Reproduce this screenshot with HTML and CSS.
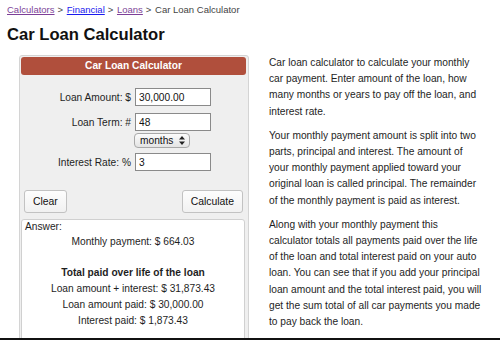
FILE: index.html
```html
<!DOCTYPE html>
<html lang="en">
<head>
    <meta charset="UTF-8">
    <meta name="viewport" content="width=device-width, initial-scale=1.0">
    <title>Car Loan Calculator</title>
    <link rel="stylesheet" href="styles.css">
</head>
<body>
    <div class="breadcrumb">
        <a href="#" class="visited">Calculators</a><span class="sep">&gt;</span>
        <a href="#">Financial</a><span class="sep">&gt;</span>
        <a href="#" class="visited">Loans</a><span class="sep">&gt;</span>
        <span>Car Loan Calculator</span>
    </div>

    <h1>Car Loan Calculator</h1>

    <div class="main">
        <!-- Calculateur -->
        <div class="calc">
            <div class="calc-title">Car Loan Calculator</div>
            <form id="loanForm">
                <div class="row first">
                    <label for="amount">Loan Amount: $</label>
                    <input type="text" id="amount" value="30,000.00">
                </div>
                <div class="row">
                    <label for="term">Loan Term: #</label>
                    <input type="text" id="term" value="48">
                </div>
                <div class="row-select">
                    <span class="select">
                        <select id="unit">
                            <option>months</option>
                            <option>years</option>
                        </select>
                        <svg width="6" height="9" viewBox="0 0 6 9"><path d="M3 0 L6 3.5 H0 Z M3 9 L6 5.5 H0 Z" fill="#222"/></svg>
                    </span>
                </div>
                <div class="row rate">
                    <label for="rate">Interest Rate: %</label>
                    <input type="text" id="rate" value="3">
                </div>
                <div class="buttons">
                    <button type="button" onclick="clearForm()">Clear</button>
                    <button type="submit">Calculate</button>
                </div>
            </form>

            <div class="answer">
                <div class="answer-label">Answer:</div>
                <div class="answer-body">
                    <p>Monthly payment: $ <span id="monthly">664.03</span></p>
                    <p class="blank">&nbsp;</p>
                    <p class="bold">Total paid over life of the loan</p>
                    <p>Loan amount + interest: $ <span id="total">31,873.43</span></p>
                    <p>Loan amount paid: $ <span id="principal">30,000.00</span></p>
                    <p>Interest paid: $ <span id="interest">1,873.43</span></p>
                </div>
            </div>
        </div>

        <!-- Texte -->
        <div class="info">
            <p>Car loan calculator to calculate your monthly car payment. Enter amount of the loan, how many months or years to pay off the loan, and interest rate.</p>
            <p>Your monthly payment amount is split into two parts, principal and interest. The amount of your monthly payment applied toward your original loan is called principal. The remainder of the monthly payment is paid as interest.</p>
            <p>Along with your monthly payment this calculator totals all payments paid over the life of the loan and total interest paid on your auto loan. You can see that if you add your principal loan amount and the total interest paid, you will get the sum total of all car payments you made to pay back the loan.</p>
        </div>
    </div>

    <script>
        function fmt(n) {
            return n.toLocaleString('en-US', { minimumFractionDigits: 2, maximumFractionDigits: 2 });
        }

        document.getElementById('loanForm').addEventListener('submit', function (event) {
            event.preventDefault();
            const amount = parseFloat(document.getElementById('amount').value.replace(/,/g, '')) || 0;
            let n = parseFloat(document.getElementById('term').value) || 0;
            if (document.getElementById('unit').value === 'years') n = n * 12;
            const r = (parseFloat(document.getElementById('rate').value) || 0) / 1200;
            const monthly = r ? amount * r / (1 - Math.pow(1 + r, -n)) : amount / n;
            document.getElementById('monthly').textContent = fmt(monthly);
            document.getElementById('total').textContent = fmt(monthly * n);
            document.getElementById('principal').textContent = fmt(amount);
            document.getElementById('interest').textContent = fmt(monthly * n - amount);
        });

        function clearForm() {
            document.getElementById('amount').value = '';
            document.getElementById('term').value = '';
            document.getElementById('rate').value = '';
        }
    </script>
</body>
</html>
```

FILE: styles.css
```css
body {
    font-family: "Liberation Sans", Arial, sans-serif;
    font-size: 10.2px;
    color: #1e1e1e;
    background-color: #fff;
    margin: 0;
    padding: 3px 7px 0;
    overflow: hidden;
}

body::after {
    content: "";
    position: fixed;
    left: 0;
    right: 0;
    bottom: 0;
    height: 2px;
    background-color: #111;
}

.breadcrumb {
    font-size: 9.5px;
    line-height: 14px;
    color: #555;
}

.breadcrumb a {
    color: #1a1aee;
}

.breadcrumb a.visited {
    color: #7d3f98;
}

.breadcrumb .sep {
    margin: 0 1px 0 3px;
}

.breadcrumb span {
    color: #444;
}

h1 {
    font-size: 16.6px;
    line-height: 20px;
    margin: 8px 0 10px;
    color: #111;
}

.main {
    display: flex;
    align-items: flex-start;
}

.calc {
    width: 230px;
    box-sizing: border-box;
    margin-left: 12px;
    padding: 1px 2px 0 1px;
    background-color: #efefef;
    border: 1px solid #d4d4d4;
    border-radius: 3px;
    height: 300px;
}

.calc-title {
    height: 18px;
    line-height: 18px;
    background-color: #b04f3c;
    color: #fff;
    font-weight: bold;
    text-align: center;
    border-radius: 3px;
}

.row {
    display: flex;
    align-items: center;
    gap: 4px;
    margin-top: 7px;
}

.row.first {
    margin-top: 13px;
}

.row.rate {
    margin-top: 5px;
}

.row label {
    width: 110px;
    text-align: right;
}

input[type="text"] {
    width: 76px;
    height: 18px;
    box-sizing: border-box;
    padding: 0 3px;
    border: 1px solid #8a8a8a;
    font-family: inherit;
    font-size: 10.2px;
    color: #111;
    background: #fff;
}

.row-select {
    margin-top: 2px;
    padding-left: 113px;
}

.select {
    position: relative;
    display: inline-block;
}

.select select {
    appearance: none;
    -webkit-appearance: none;
    width: 56px;
    height: 15px;
    padding: 0 0 0 5px;
    border: 1px solid #a8a8a8;
    border-radius: 4px;
    background: linear-gradient(#fbfbfb, #e4e4e4);
    font-family: inherit;
    font-size: 10.2px;
    line-height: 13px;
    color: #111;
    display: block;
}

.select svg {
    position: absolute;
    right: 5px;
    top: 3px;
}

.buttons {
    display: flex;
    justify-content: space-between;
    margin-top: 19px;
    padding: 0 3px;
}

button {
    height: 23px;
    padding: 0 8px;
    border: 1px solid #c2c2c2;
    border-radius: 3px;
    background: linear-gradient(#fdfdfd, #f1f1f1);
    font-family: inherit;
    font-size: 10.4px;
    color: #111;
    cursor: pointer;
}

.answer {
    margin: 6px 1px 0 0;
    background-color: #fff;
    border: 1px solid #d0d0d0;
    border-radius: 3px;
    padding: 0 3px 20px;
    height: 200px;
}

.answer-label {
    line-height: 14px;
}

.answer-body {
    text-align: center;
}

.answer-body p {
    margin: 0;
    line-height: 16px;
}

.answer-body .blank {
    line-height: 15px;
}

.answer-body .bold {
    font-weight: bold;
}

.info {
    width: 215px;
    margin-left: 20px;
}

.info p {
    margin: 0 0 8px;
    line-height: 16.2px;
}
```
